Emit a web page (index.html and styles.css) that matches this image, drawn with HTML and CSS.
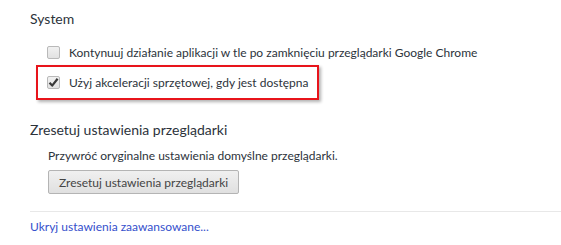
FILE: index.html
```html
<!DOCTYPE html>
<html lang="pl">
<head>
    <meta charset="UTF-8">
    <title>Ustawienia</title>
    <link rel="stylesheet" href="styles.css">
</head>
<body>
    <div class="page">
        <section class="section">
            <h3>System</h3>
            <div class="options">
                <label class="option">
                    <span class="checkbox"></span>
                    <span>Kontynuuj działanie aplikacji w tle po zamknięciu przeglądarki Google Chrome</span>
                </label>
                <label class="option highlight">
                    <span class="checkbox">
                        <svg width="11" height="11" viewBox="0 0 11 11"><path d="M1.5 5.8 L4.2 8.6 L9.6 1.8" fill="none" stroke="#3a3a3a" stroke-width="2.2" stroke-linejoin="round"/></svg>
                    </span>
                    <span>Użyj akceleracji sprzętowej, gdy jest dostępna</span>
                </label>
            </div>
        </section>

        <section class="section reset">
            <h3>Zresetuj ustawienia przeglądarki</h3>
            <div class="options">
                <p class="desc">Przywróć oryginalne ustawienia domyślne przeglądarki.</p>
                <button class="btn">Zresetuj ustawienia przeglądarki</button>
            </div>
        </section>
    </div>

    <div class="footer">
        <a href="#">Ukryj ustawienia zaawansowane...</a>
    </div>
</body>
</html>
```

FILE: styles.css
```css
body {
    font-family: Lato, "Open Sans", sans-serif;
    font-size: 12px;
    color: #2c333b;
    background-color: white;
    margin: 0;
    padding: 0;
}
.page {
    padding: 0 0 0 30px;
}
.section h3 {
    font-size: 14px;
    font-weight: normal;
    margin: 0;
    padding-top: 9px;
    line-height: 20px;
}
.options {
    padding-left: 17px;
    padding-top: 10px;
}
.option {
    display: flex;
    align-items: center;
    gap: 9px;
    height: 26px;
}
.option.highlight {
    width: fit-content;
    height: 31px;
    margin-left: -11px;
    padding: 0 9px;
    border: 2px solid #e8141b;
    box-shadow: 2px 2px 3px rgba(0,0,0,0.3);
}
.checkbox {
    width: 11px;
    height: 11px;
    border: 1px solid #b9b9b9;
    border-radius: 2px;
    background: linear-gradient(#f1f1f1, #e2e2e2);
    display: flex;
    align-items: center;
    justify-content: center;
}
.reset h3 {
    padding-top: 20px;
}
.reset .options {
    padding-top: 6px;
    padding-left: 18px;
}
.desc {
    margin: 0;
    line-height: 20px;
}
.btn {
    margin-top: 4px;
    font-family: inherit;
    font-size: 12px;
    color: #444;
    height: 24px;
    padding: 0 10px;
    border: 1px solid #b4b4b4;
    border-radius: 2px;
    background: linear-gradient(#f0f0f0, #e0e0e0);
}
.footer {
    margin: 17px 0 0 30px;
    border-top: 1px solid #e8e8e8;
    padding-top: 7px;
    line-height: 16px;
}
.footer a {
    color: #3550cc;
    text-decoration: none;
}
```
